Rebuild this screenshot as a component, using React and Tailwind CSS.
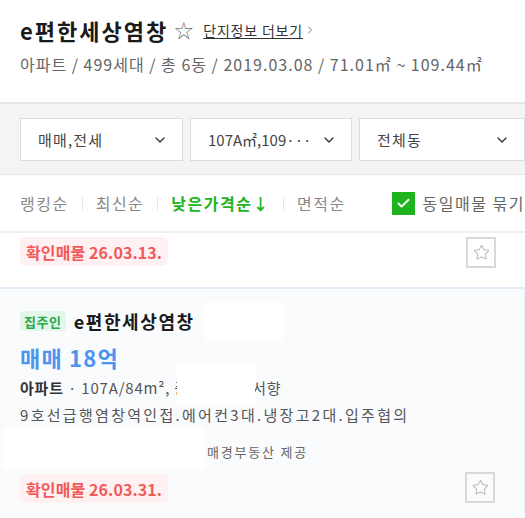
import React from 'react'
import { ChevronDown, ChevronRight, Check, Star } from 'lucide-react'

const font = { fontFamily: '"Noto Sans CJK KR", "Noto Sans", sans-serif' }

const Select = ({ label, className, track = 'tracking-[1.2px]' }) => (
  <div className={`h-[43px] bg-white border border-[#dcdcdc] flex items-center justify-between pl-[17px] pr-[14px] ${className}`}>
    <span className={`text-[15px] text-[#444] leading-none whitespace-nowrap ${track}`}>{label}</span>
    <ChevronDown className="w-[16px] h-[16px] text-[#333] shrink-0" strokeWidth={2} />
  </div>
)

const Confirm = ({ date }) => (
  <span className="inline-flex items-center h-[29px] px-[6px] rounded-[5px] bg-[#fff1f1] text-[#f25a5a] text-[16px] font-bold tracking-[0.1px] leading-none">
    확인매물 {date}
  </span>
)

const StarBox = () => (
  <div className="w-[30px] h-[31px] border-2 border-[#d9d9d9] flex items-center justify-center">
    <Star className="w-[17px] h-[17px] text-[#bbb]" strokeWidth={1.5} />
  </div>
)

const Sep = () => <span className="w-px h-[13px] bg-[#e6e6e6] mx-[13px]" />

export default function App() {
  return (
    <div style={font} className="w-[525px] h-[518px] overflow-hidden bg-white text-[#222]">
      {/* 단지 헤더 */}
      <div className="h-[102px] px-[20px] pt-[16px]">
        <div className="flex items-center h-[27px]">
          <h1 className="text-[22px] font-bold tracking-[2px] leading-none text-[#1a1a1a]">e편한세상염창</h1>
          <span className="ml-[6px] text-[19px] text-[#777] leading-none">☆</span>
          <a className="ml-[10px] flex items-center text-[14px] text-[#333] underline underline-offset-2 tracking-[0.8px] leading-none">
            단지정보 더보기
            <ChevronRight className="w-[12px] h-[12px] ml-[1px] text-[#555]" strokeWidth={1.6} />
          </a>
        </div>
        <p className="mt-[13px] text-[16px] text-[#666] tracking-[1px] leading-none whitespace-nowrap">
          아파트 / 499세대 / 총 6동 / 2019.03.08 / 71.01㎡ ~ 109.44㎡
        </p>
      </div>

      {/* 필터 */}
      <div className="h-[73px] bg-[#f4f4f4] border-t-2 border-b border-[#e6e6e6] flex gap-[7px] pl-[20px] pt-[14px]">
        <Select label="매매,전세" className="w-[164px]" />
        <Select label="107A㎡,109···" className="w-[163px] pl-[16px]" track="tracking-[0px]" />
        <Select label="전체동" className="w-[166px] shrink-0" />
      </div>

      {/* 정렬 */}
      <div className="h-[58px] border-b-2 border-[#efefef] flex items-center pl-[20px] text-[16px] tracking-[1.5px] leading-none">
        <span className="text-[#888]">랭킹순</span>
        <Sep />
        <span className="text-[#888]">최신순</span>
        <Sep />
        <span className="text-[#21b41e] font-bold">낮은가격순↓</span>
        <Sep />
        <span className="text-[#888]">면적순</span>
        <div className="ml-[46px] flex items-center shrink-0">
          <span className="w-[23px] h-[23px] bg-[#1fb41d] flex items-center justify-center">
            <Check className="w-[15px] h-[15px] text-white" strokeWidth={3} />
          </span>
          <span className="ml-[8px] text-[#666] whitespace-nowrap">동일매물 묶기</span>
        </div>
      </div>

      {/* 이전 매물 하단 */}
      <div className="h-[56px] border-b-2 border-[#e3ebf6] flex items-start justify-between pl-[20px] pr-[29px] pt-[4px]">
        <Confirm date="26.03.13." />
        <StarBox />
      </div>

      {/* 매물 카드 */}
      <div className="bg-[#fafbfd] border-r border-[#eef1f5] h-[230px] pl-[20px] pr-[29px] relative">
        <div className="flex items-center pt-[22px] h-[42px]">
          <span className="h-[20px] px-[4px] rounded-[4px] bg-[#e3f6e9] text-[#25a94a] text-[13px] font-bold tracking-[0.6px] leading-none flex items-center">집주인</span>
          <span className="ml-[8px] text-[18px] font-bold tracking-[1.6px] leading-none text-[#1a1a1a]">e편한세상염창</span>
        </div>
        <div className="mt-[15px] text-[22px] font-bold text-[#4c95ee] tracking-[1.2px] leading-none">매매 18억</div>
        <div className="mt-[12px] text-[15px] text-[#555] tracking-[0.8px] leading-none whitespace-nowrap">
          <span className="font-bold text-[#333]">아파트</span> · 107A/84m², 중/15층, 남서향
        </div>
        <div className="mt-[12px] text-[15px] text-[#555] tracking-[2.3px] leading-none whitespace-nowrap">
          9호선급행염창역인접.에어컨3대.냉장고2대.입주협의
        </div>
        <div className="mt-[23px] pl-[187px] text-[13px] text-[#666] tracking-[1.8px] leading-none">매경부동산 제공</div>
        <div className="mt-[16px] flex items-start justify-between">
          <Confirm date="26.03.31." />
          <span className="-mt-[2px]"><StarBox /></span>
        </div>

        {/* 가림 처리 */}
        <div className="absolute left-[205px] top-[13px] w-[78px] h-[39px] bg-white" />
        <div className="absolute left-[177px] top-[75px] w-[78px] h-[40px] bg-white" />
        <div className="absolute left-[3px] top-[139px] w-[202px] h-[41px] bg-white" />
      </div>
    </div>
  )
}
